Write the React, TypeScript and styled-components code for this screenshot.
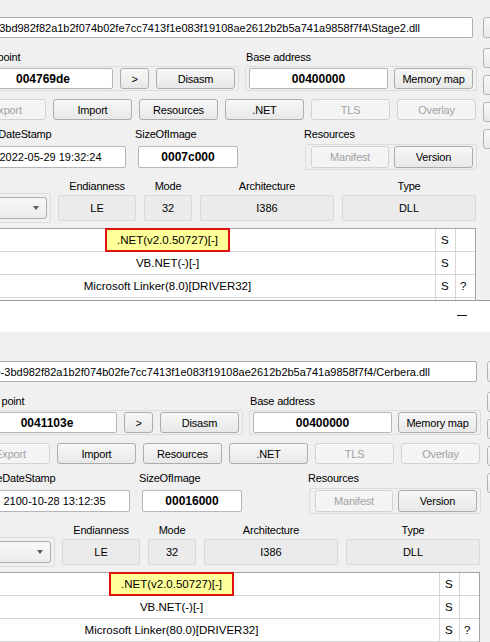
import React from 'react';
import styled, { createGlobalStyle } from 'styled-components';

const GlobalStyle = createGlobalStyle`
  html, body {
    margin: 0;
    padding: 0;
    background: #f0f0f0;
    overflow: hidden;
  }
  body {
    font-family: 'Liberation Sans', Arial, sans-serif;
    font-size: 11px;
    color: #000;
  }
`;

const Screen = styled.div`
  width: 490px;
  height: 642px;
  overflow: hidden;
  display: flex;
  flex-direction: column;
`;

const Panel = styled.section<{ $left: number; $top: number; $height: number; $edge?: boolean }>`
  flex: none;
  box-sizing: border-box;
  width: 560px;
  height: ${p => p.$height}px;
  margin-left: ${p => p.$left}px;
  padding-top: ${p => p.$top}px;
  overflow: hidden;
  background: #f0f0f0;
  border-bottom: ${p => (p.$edge ? '1px solid #9c9c9c' : 'none')};
`;

const TitleBar = styled.div`
  flex: none;
  height: 31px;
  background: #fff;
  display: flex;
  justify-content: flex-end;
  align-items: flex-start;
  padding: 14px 23px 0 0;
  box-sizing: border-box;
`;

const Minimize = styled.span`
  width: 10px;
  height: 1px;
  background: #111;
`;

const PathRow = styled.div`
  display: flex;
  align-items: center;
`;

const PathBox = styled.div<{ $pad: number }>`
  width: 506px;
  height: 21px;
  box-sizing: border-box;
  display: flex;
  justify-content: flex-end;
  align-items: center;
  overflow: hidden;
  white-space: nowrap;
  padding-right: ${p => p.$pad}px;
  background: #fff;
  border: 1px solid #abadb3;
  border-radius: 2px;
`;

const Body = styled.div`
  display: flex;
  align-items: flex-start;
`;

const Main = styled.div`
  width: 510px;
  display: flex;
  flex-direction: column;
`;

const Side = styled.div`
  margin-left: 6px;
  margin-top: 10px;
  display: flex;
  flex-direction: column;
  gap: 7px;
`;

const SideButton = styled.div<{ $ml?: number; $h?: number }>`
  width: 30px;
  height: ${p => p.$h ?? 20}px;
  margin-left: ${p => p.$ml ?? 0}px;
  box-sizing: border-box;
  border: 1px solid #b3b3b3;
  border-radius: 3px;
  background: linear-gradient(#f8f8f8, #e9e9e9);
`;

const Row = styled.div<{ $mt: number; $pl?: number; $gap?: number }>`
  display: flex;
  align-items: flex-start;
  margin-top: ${p => p.$mt}px;
  padding-left: ${p => p.$pl ?? 0}px;
  gap: ${p => p.$gap ?? 0}px;
`;

const Column = styled.div<{ $w: number; $ml?: number }>`
  width: ${p => p.$w}px;
  margin-left: ${p => p.$ml ?? 0}px;
  display: flex;
  flex-direction: column;
`;

const Caption = styled.div<{ $center?: boolean; $indent?: number }>`
  height: 14px;
  line-height: 14px;
  white-space: nowrap;
  text-align: ${p => (p.$center ? 'center' : 'left')};
  margin-left: ${p => p.$indent ?? 0}px;
  letter-spacing: -0.2px;
`;

const Frame = styled.div<{ $mt?: number; $pad: string; $gap: number }>`
  display: flex;
  align-items: center;
  margin-top: ${p => p.$mt ?? 0}px;
  padding: ${p => p.$pad};
  gap: ${p => p.$gap}px;
  border: 1px solid #dcdcdc;
  border-radius: 2px;
`;

const ValueBox = styled.div<{ $w: number; $h: number; $bold?: boolean; $mt?: number; $ml?: number }>`
  width: ${p => p.$w}px;
  height: ${p => p.$h}px;
  margin-top: ${p => p.$mt ?? 0}px;
  margin-left: ${p => p.$ml ?? 0}px;
  box-sizing: border-box;
  display: flex;
  align-items: center;
  justify-content: center;
  background: #fff;
  border: 1px solid #b4b6bb;
  border-radius: 2px;
  font-weight: ${p => (p.$bold ? 700 : 400)};
  font-size: ${p => (p.$bold ? 12 : 11)}px;
  white-space: nowrap;
`;

const Button = styled.div<{ $w?: number; $h?: number; $off?: boolean }>`
  flex: none;
  width: ${p => p.$w ?? 79}px;
  height: ${p => p.$h ?? 21}px;
  box-sizing: border-box;
  display: flex;
  align-items: center;
  justify-content: center;
  border: 1px solid ${p => (p.$off ? '#d2d2d2' : '#acacac')};
  border-radius: 3px;
  background: ${p => (p.$off ? '#f4f4f4' : 'linear-gradient(#f7f7f7, #e8e8e8)')};
  color: ${p => (p.$off ? '#a2a2a2' : '#000')};
  white-space: nowrap;
  letter-spacing: -0.2px;
`;

const Combo = styled.div`
  width: 76px;
  height: 22px;
  box-sizing: border-box;
  display: flex;
  align-items: center;
  justify-content: flex-end;
  padding-right: 7px;
  border: 1px solid #acacac;
  border-radius: 3px;
  background: linear-gradient(#f8f8f8, #ececec);
`;

const Arrow = styled.span`
  width: 0;
  height: 0;
  border-left: 3.5px solid transparent;
  border-right: 3.5px solid transparent;
  border-top: 4px solid #5a5a5a;
`;

const InfoField = styled.div`
  height: 26px;
  margin-top: 2px;
  box-sizing: border-box;
  display: flex;
  align-items: center;
  justify-content: center;
  background: #ebebeb;
  border: 1px solid #d9d9d9;
  border-radius: 2px;
`;

/* the result list reaches further left than the window edge in the shot */
const Table = styled.div`
  margin-top: 5px;
  margin-left: -68px;
  width: 577px;
  box-sizing: border-box;
  border: 1px solid #a3a3a3;
  background: #fff;
`;

const TableRow = styled.div`
  display: flex;
  height: 23px;
  box-sizing: border-box;
  border-bottom: 1px solid #d6d6d6;
`;

const NameCell = styled.div`
  flex: 1;
  display: flex;
  align-items: center;
  justify-content: center;
  white-space: nowrap;
  font-size: 11.5px;
`;

const FlagCell = styled.div<{ $pad: number }>`
  width: 20px;
  box-sizing: border-box;
  display: flex;
  align-items: center;
  padding-left: ${p => p.$pad}px;
  border-left: 1px solid #d6d6d6;
  font-size: 11.5px;
`;

const Highlight = styled.span`
  align-self: stretch;
  display: flex;
  align-items: center;
  padding: 0 10px;
  margin-top: -1px;
  margin-bottom: -1px;
  background: #ffff99;
  border: 2px solid #e01010;
`;

type DieInfo = {
  left: number;
  top: number;
  height: number;
  edge?: boolean;
  path: string;
  pathPad: number;
  entry: string;
  base: string;
  date: string;
  size: string;
  linker: string;
};

const DiePanel: React.FC<DieInfo> = p => (
  <Panel $left={p.left} $top={p.top} $height={p.height} $edge={p.edge}>
    <PathRow>
      <PathBox $pad={p.pathPad}>
        <span>{p.path}</span>
      </PathBox>
      <SideButton $ml={10} $h={21} />
    </PathRow>
    <Body>
      <Main>
        <Row $mt={12} $pl={2} $gap={6}>
          <Column $w={270}>
            <Caption $indent={1}>Entry point</Caption>
            <Frame $mt={2} $pad="1px 3px" $gap={7}>
              <ValueBox $w={140} $h={21} $bold>{p.entry}</ValueBox>
              <Button $w={29}>&gt;</Button>
              <Button>Disasm</Button>
            </Frame>
          </Column>
          <Column $w={232}>
            <Caption $indent={1}>Base address</Caption>
            <Frame $mt={2} $pad="1px 3px" $gap={6}>
              <ValueBox $w={139} $h={21} $bold>{p.base}</ValueBox>
              <Button>Memory map</Button>
            </Frame>
          </Column>
        </Row>

        <Row $mt={8} $gap={7}>
          <Button $off>Export</Button>
          <Button>Import</Button>
          <Button>Resources</Button>
          <Button>.NET</Button>
          <Button $off>TLS</Button>
          <Button $off>Overlay</Button>
        </Row>

        <Row $mt={7} $pl={8}>
          <Column $w={151}>
            <Caption>TimeDateStamp</Caption>
            <ValueBox $w={151} $h={22} $mt={5}>{p.date}</ValueBox>
          </Column>
          <Column $w={103} $ml={9}>
            <Caption>SizeOfImage</Caption>
            <ValueBox $w={100} $h={22} $mt={5} $ml={3} $bold>{p.size}</ValueBox>
          </Column>
          <Column $w={173} $ml={67}>
            <Caption $indent={-1}>Resources</Caption>
            <Frame $mt={3} $pad="1px 3px 1px 5px" $gap={5}>
              <Button $w={78} $h={22} $off>Manifest</Button>
              <Button $h={22}>Version</Button>
            </Frame>
          </Column>
        </Row>

        <Row $mt={9}>
          <Column $w={84}>
            <Caption />
            <Frame $pad="3px" $gap={0}>
              <Combo>
                <Arrow />
              </Combo>
            </Frame>
          </Column>
          <Column $w={78} $ml={7}>
            <Caption $center>Endianness</Caption>
            <InfoField>LE</InfoField>
          </Column>
          <Column $w={48} $ml={8}>
            <Caption $center>Mode</Caption>
            <InfoField>32</InfoField>
          </Column>
          <Column $w={134} $ml={8}>
            <Caption $center>Architecture</Caption>
            <InfoField>I386</InfoField>
          </Column>
          <Column $w={134} $ml={8}>
            <Caption $center>Type</Caption>
            <InfoField>DLL</InfoField>
          </Column>
        </Row>

        <Table>
          <TableRow>
            <NameCell>
              <Highlight>.NET(v2.0.50727)[-]</Highlight>
            </NameCell>
            <FlagCell $pad={5}>S</FlagCell>
            <FlagCell $pad={4} />
          </TableRow>
          <TableRow>
            <NameCell>VB.NET(-)[-]</NameCell>
            <FlagCell $pad={5}>S</FlagCell>
            <FlagCell $pad={4} />
          </TableRow>
          <TableRow>
            <NameCell>{p.linker}</NameCell>
            <FlagCell $pad={5}>S</FlagCell>
            <FlagCell $pad={4}>?</FlagCell>
          </TableRow>
          <TableRow>
            <NameCell />
            <FlagCell $pad={5} />
            <FlagCell $pad={4} />
          </TableRow>
        </Table>
      </Main>
      <Side>
        <SideButton />
        <SideButton />
        <SideButton />
        <SideButton />
      </Side>
    </Body>
  </Panel>
);

const HASH = '-3bd982f82a1b2f074b02fe7cc7413f1e083f19108ae2612b2b5a741a9858f7f4';

const App: React.FC = () => (
  <>
    <GlobalStyle />
    <Screen>
      <DiePanel
        left={-33}
        top={17}
        height={301}
        edge
        path={`C:\\Users\\analyst\\Desktop\\samples\\0c1e${HASH}\\Stage2.dll`}
        pathPad={52}
        entry="004769de"
        base="00400000"
        date="2022-05-29 19:32:24"
        size="0007c000"
        linker="Microsoft Linker(8.0)[DRIVER32]"
      />
      <TitleBar>
        <Minimize />
      </TitleBar>
      <DiePanel
        left={-29}
        top={29}
        height={310}
        path={`/home/analyst/samples/0c1e${HASH}/Cerbera.dll`}
        pathPad={46}
        entry="0041103e"
        base="00400000"
        date="2100-10-28 13:12:35"
        size="00016000"
        linker="Microsoft Linker(80.0)[DRIVER32]"
      />
    </Screen>
  </>
);

export default App;
